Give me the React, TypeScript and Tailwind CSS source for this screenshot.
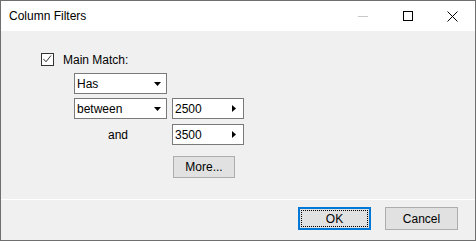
import React from 'react';

const font = { fontFamily: '"Liberation Sans", Arial, sans-serif' };

function DownArrow() {
  return (
    <svg width="7" height="4" viewBox="0 0 7 4" className="block">
      <path d="M0 0H7L3.5 4Z" fill="#000" />
    </svg>
  );
}

function RightArrow() {
  return (
    <svg width="4" height="7" viewBox="0 0 4 7" className="block">
      <path d="M0 0V7L4 3.5Z" fill="#000" />
    </svg>
  );
}

function Select({ label }: { label: string }) {
  return (
    <div className="flex items-center justify-between w-[93px] h-[21px] bg-white border border-[#7a7a7a] pl-[2px] pr-[5px]">
      <span className="text-[12px] leading-none text-black">{label}</span>
      <DownArrow />
    </div>
  );
}

function ValueBox({ value }: { value: string }) {
  return (
    <div className="flex items-center justify-between w-[72px] h-[21px] bg-white border border-[#7a7a7a] pl-[2px] pr-[7px]">
      <span className="text-[12px] leading-none text-black">{value}</span>
      <RightArrow />
    </div>
  );
}

export default function App() {
  return (
    <div style={font} className="w-[476px] h-[241px] flex flex-col border border-[#6f6f6f] bg-[#f0f0f0] text-black">
      {/* title bar */}
      <div className="h-[30px] bg-white flex items-center">
        <span className="pl-[8px] text-[12px] leading-none">Column Filters</span>
        <div className="ml-auto flex items-center h-full">
          <div className="w-[45px] h-full flex items-center justify-center">
            <div className="w-[10px] h-px bg-[#c8c8c8] mt-[1px]" />
          </div>
          <div className="w-[45px] h-full flex items-center justify-center">
            <div className="w-[10px] h-[10px] border border-black" />
          </div>
          <div className="w-[45px] h-full flex items-center justify-center">
            <svg width="11" height="11" viewBox="0 0 11 11">
              <path d="M0.5 0.5L10.5 10.5M10.5 0.5L0.5 10.5" stroke="#000" strokeWidth="1" />
            </svg>
          </div>
        </div>
      </div>

      {/* body */}
      <div className="flex-1 pl-[40px] pt-[22px]">
        <div className="flex items-center h-[13px]">
          <div className="w-[13px] h-[13px] border border-[#333] bg-white flex items-center justify-center">
            <svg width="11" height="11" viewBox="0 0 11 11">
              <path d="M1.5 5L4 7.8L9 1.5" fill="none" stroke="#333" strokeWidth="1" />
            </svg>
          </div>
          <span className="ml-[9px] text-[12px] leading-none">Main Match:</span>
        </div>

        <div className="pl-[33px] mt-[7px] flex flex-col">
          <Select label="Has" />
          <div className="flex mt-[4px]">
            <Select label="between" />
            <div className="ml-[5px]">
              <ValueBox value="2500" />
            </div>
          </div>
          <div className="flex mt-[5px] items-center">
            <div className="w-[93px] pl-[34px] text-[12px] leading-none">and</div>
            <div className="ml-[5px]">
              <ValueBox value="3500" />
            </div>
          </div>
          <div className="ml-[99px] mt-[11px]">
            <div className="w-[62px] h-[22px] bg-[#e1e1e1] border border-[#adadad] flex items-center justify-center text-[12px] leading-none">
              More...
            </div>
          </div>
        </div>
      </div>

      {/* footer */}
      <div className="h-[41px] border-t border-white flex justify-end pt-[7px] pr-[17px] gap-[14px]">
        <div className="relative w-[73px] h-[23px] bg-[#e1e1e1] border-2 border-[#0078d7] flex items-center justify-center text-[12px] leading-none">
          <div className="absolute inset-[1px] border border-dotted border-black" />
          OK
        </div>
        <div className="w-[73px] h-[23px] bg-[#e1e1e1] border border-[#adadad] flex items-center justify-center text-[12px] leading-none">
          Cancel
        </div>
      </div>
    </div>
  );
}
